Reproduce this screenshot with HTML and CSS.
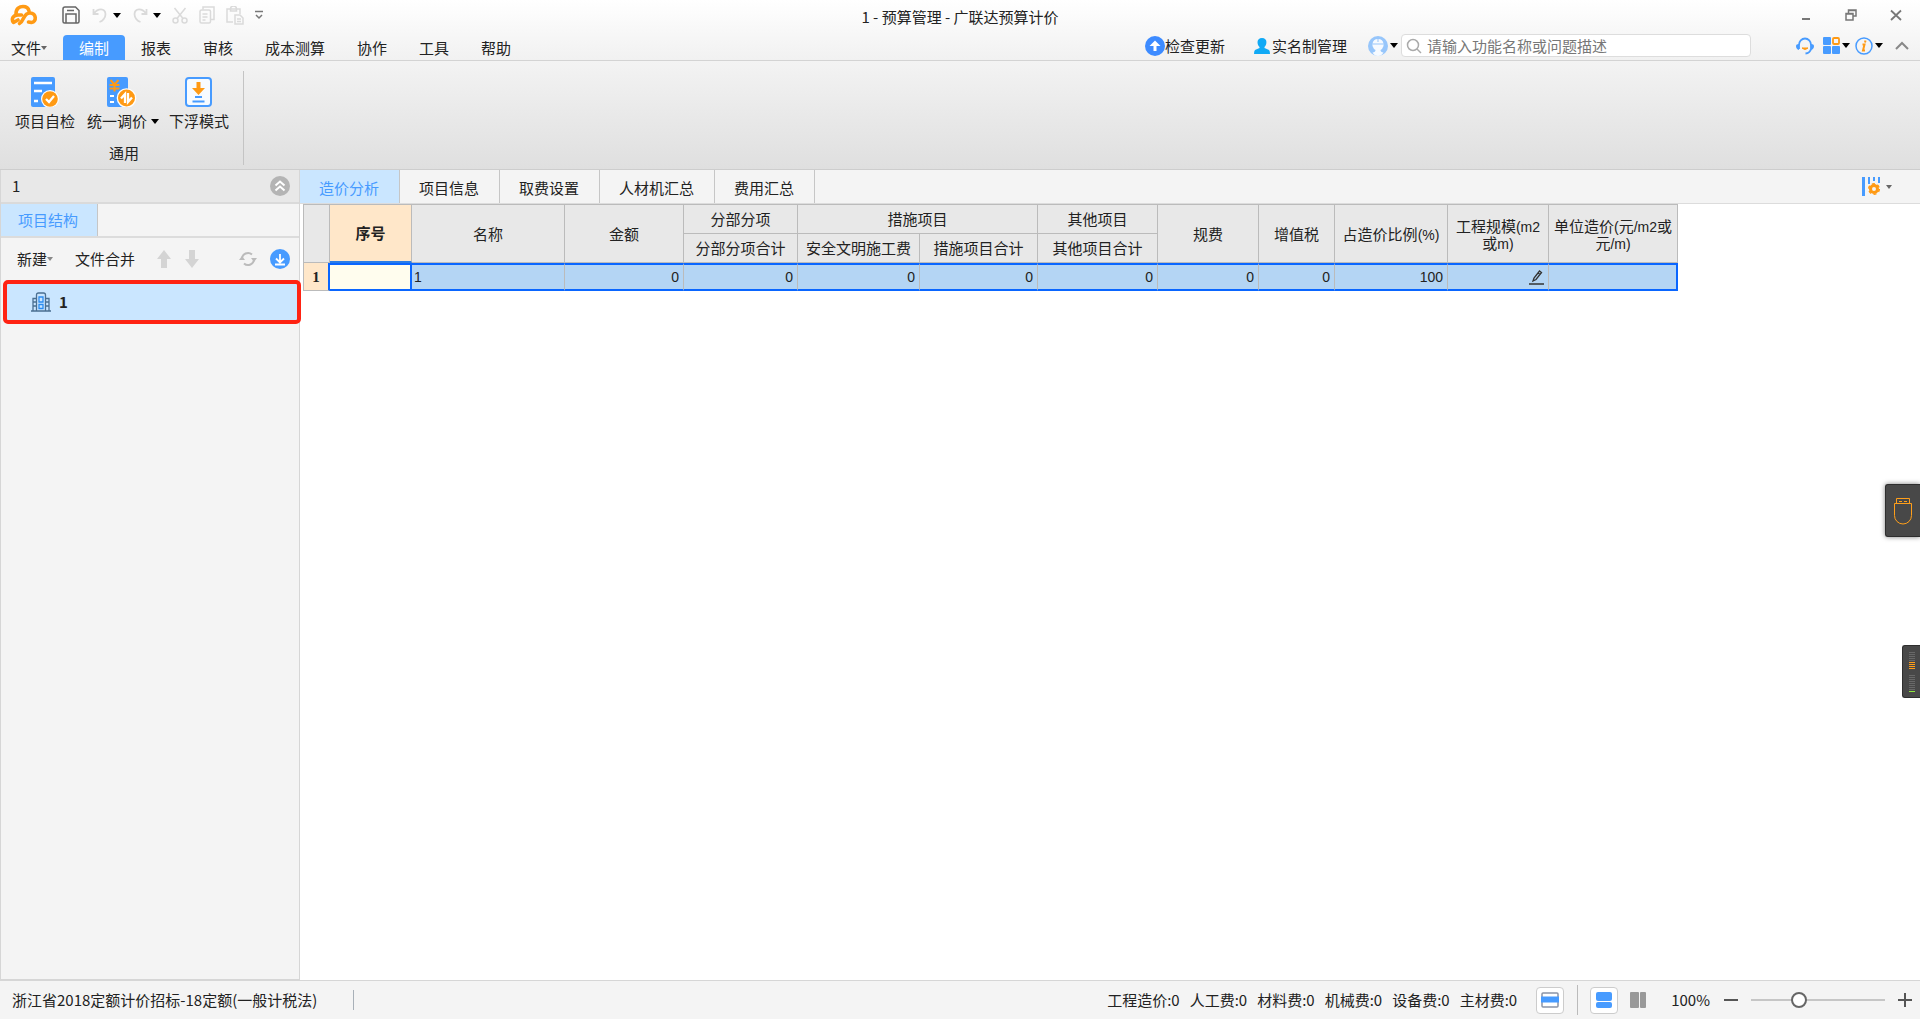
FILE: index.html
```html
<!DOCTYPE html>
<html lang="zh-CN">
<head>
<meta charset="utf-8">
<title>1 - 预算管理 - 广联达预算计价</title>
<link rel="stylesheet" href="styles.css">
</head>
<body>
<header class="top">
  <div class="titlebar">
    <div class="quick">
      <svg class="logo" width="28" height="22" viewBox="0 0 28 22" fill="none" stroke="#ff9a14" stroke-width="3.600" stroke-linecap="round" stroke-linejoin="round"><path d="M6 9.500C6 4.500 9.500 2.500 13 2.500c3.500 0 5.500 2 6 4.500"/><path d="M11.500 11H8C3 11 1 15 3.500 18.500L8 16"/><path d="M9.500 19.500C14.500 17 13 9 20 9c6.500 0 7 9 1.500 9.500L18.500 18"/></svg>
      <button class="ib save" aria-label="保存"><svg width="18" height="18" viewBox="0 0 18 18" fill="none" stroke="#666" stroke-width="1.500"><path d="M3 1h10.500l3.500 3.500v11q0 1.500-1.500 1.500h-13Q1 17 1 15.500V3q0-2 2-2zM4 16.500V8h10v8.500M5 4.500h7"/></svg></button>
      <button class="ib split" aria-label="撤销"><svg width="16" height="16" viewBox="0 0 16 16" fill="none" stroke="#dadada" stroke-width="1.800"><path d="M1.500 2v5h5M2 6.500C6 1 13 1 13.500 7c0 4-3 7-6 8"/></svg><i class="caret"></i></button>
      <button class="ib split" aria-label="恢复"><svg width="16" height="16" viewBox="0 0 16 16" fill="none" stroke="#dadada" stroke-width="1.800"><path d="M14.500 2v5h-5M14 6.500C10 1 3 1 2.500 7c0 4 3 7 6 8"/></svg><i class="caret"></i></button>
      <button class="ib" aria-label="剪切"><svg width="16" height="17" viewBox="0 0 16 17" fill="none" stroke="#dadada" stroke-width="1.500"><path d="M2.500 1l8.500 10.500M13.500 1L5 11.500"/><circle cx="3.500" cy="13.500" r="2.500"/><circle cx="12.500" cy="13.500" r="2.500"/></svg></button>
      <button class="ib" aria-label="复制"><svg width="16" height="18" viewBox="0 0 16 18" fill="none" stroke="#dadada" stroke-width="1.500"><rect x="1" y="4" width="10.500" height="13" rx="1.500"/><path d="M4 3.500V1h11v12.500h-3M3.500 8h5M3.500 11h5M3.500 14h3"/></svg></button>
      <button class="ib" aria-label="粘贴"><svg width="18" height="19" viewBox="0 0 18 19" fill="none" stroke="#dadada" stroke-width="1.500"><path d="M7 16H1V3h13v5M4.500 5V3a3 3 0 0 1 6 0v2zM9 9h5l3 3v6H9zM11 13h4M11 15.500h4"/></svg></button>
      <button class="ib" aria-label="更多"><svg width="8" height="10" viewBox="0 0 8 10" fill="none" stroke="#777" stroke-width="1.500"><path d="M0 1.500h8M1 5l3 3 3-3"/></svg></button>
    </div>
    <h1 class="title">1 - 预算管理 - 广联达预算计价</h1>
    <div class="winbtns">
      <button class="ib" aria-label="最小化"><svg width="12" height="12" viewBox="0 0 12 12"><path d="M2 9h8v2H2z" fill="#777"/></svg></button>
      <button class="ib" aria-label="还原"><svg width="12" height="12" viewBox="0 0 12 12" fill="none" stroke="#777" stroke-width="1.500"><path d="M1 4.500h7v6.500H1zM3.500 4V1H11v6H8.500M1 5h7M3.500 1.500H11"/></svg></button>
      <button class="ib" aria-label="关闭"><svg width="12" height="12" viewBox="0 0 12 12" stroke="#777" stroke-width="1.800"><path d="M1 1.500l10 9.500M11 1.500L1 11"/></svg></button>
    </div>
  </div>
  <div class="menurow">
    <nav class="menu">
      <a class="file" href="#">文件<i class="caret grey"></i></a>
      <a class="on" href="#">编制</a>
      <a href="#">报表</a><a href="#">审核</a><a href="#">成本测算</a><a href="#">协作</a><a href="#">工具</a><a href="#">帮助</a>
    </nav>
    <div class="tools">
      <button class="ib update"><svg width="20" height="20" viewBox="0 0 20 20"><circle cx="10" cy="10" r="10" fill="#3d8bff"/><path d="M10 4.500l5.500 5.500h-4v5h-3v-5h-4z" fill="#fff"/></svg>检查更新</button>
      <button class="ib real"><svg width="16" height="16" viewBox="0 0 16 16" fill="#10a9f5"><path d="M8 0c6 0 5 7 2.500 9v1l4.500 2q1 1 1 4H0q0-3 1-4l4.500-2V9C3 7 2 0 8 0z"/></svg>实名制管理</button>
      <button class="ib split user" aria-label="账户"><svg width="20" height="20" viewBox="0 0 20 20"><circle cx="10" cy="10" r="10" fill="#97c6fb"/><path d="M4.500 8Q5 3 10 3t5.500 5v2q-1 3-3 4 0 2 3 2.500-2 3.500-5.500 3.500t-5.500-3.500q3-.5 3-2.500-2-1-3-4z" fill="#f6faff"/><path d="M4.500 8h11M10 3v3" stroke="#97c6fb"/></svg><i class="caret"></i></button>
      <div class="search">
        <svg width="16" height="16" viewBox="0 0 16 16" fill="none" stroke="#aaa" stroke-width="1.500"><circle cx="7" cy="7" r="5.500"/><path d="M11 11l4 4"/></svg>
        <input type="text" aria-label="搜索" placeholder="请输入功能名称或问题描述">
      </div>
      <button class="ib" aria-label="客服"><svg width="18" height="18" viewBox="0 0 18 18" fill="none"><path d="M3 12V8a6 6.500 0 0 1 12 0v4M15 12q-1 4-5.500 4.500" stroke="#479bff" stroke-width="1.800"/><path d="M0 9q0-2 3-2v6Q0 12 0 9zM18 9q0-2-3-2v6q3-1 3-4z" fill="#479bff"/><path d="M6 11q3 3 6 0z" fill="#ff9a14" stroke="#ff9a14"/></svg></button>
      <button class="ib split apps" aria-label="应用"><svg width="17" height="17" viewBox="0 0 17 17" fill="#479bff"><rect width="8" height="8" rx="1"/><rect y="9" width="8" height="8" rx="1"/><rect x="9" y="9" width="8" height="8" rx="1"/><rect x="10" y="1" width="6" height="6" rx="1" fill="none" stroke="#ff9a14" stroke-width="1.800"/></svg><i class="caret"></i></button>
      <button class="ib split info" aria-label="信息"><svg width="18" height="18" viewBox="0 0 18 18" fill="none"><circle cx="9" cy="9" r="8" stroke="#479bff" stroke-width="1.500"/><path d="M10.500 3.500l-.5 2M7.500 7.500h2L8 13.500h2" stroke="#ff9a14" stroke-width="2"/></svg><i class="caret"></i></button>
      <button class="ib fold" aria-label="收起"><svg width="14" height="9" viewBox="0 0 14 9" fill="none" stroke="#888" stroke-width="2"><path d="M1 8l6-6 6 6"/></svg></button>
    </div>
  </div>
</header>

<section class="ribbon">
  <div class="group">
    <div class="cmds">
      <button class="cmd"><svg width="32" height="30" viewBox="0 0 32 30"><path d="M4 0h20a2 2 0 0 1 2 2v28H4a2 2 0 0 1-2-2V2a2 2 0 0 1 2-2z" fill="#479bff"/><path d="M5 6h18M5 14h8M5 24h4" stroke="#fff" stroke-width="2.500"/><circle cx="21" cy="22" r="9" fill="#fff"/><circle cx="21" cy="22" r="7.800" fill="#ff9a14"/><path d="M17 22l3 3 5-6" fill="none" stroke="#fff" stroke-width="2.300"/></svg><span>项目自检</span></button>
      <button class="cmd"><svg width="32" height="30" viewBox="0 0 32 30"><rect x="2" width="21" height="30" rx="2" fill="#479bff"/><path d="M5.500 3l4 4.500 4-4.500M9.500 8v6.500M4.500 8h10M4.500 11.500h10" fill="none" stroke="#ff9a14" stroke-width="2"/><path d="M5 19h4M5 25h4" stroke="#fff" stroke-width="2"/><circle cx="21.500" cy="21" r="9.800" fill="#fff"/><circle cx="21.500" cy="21" r="8.500" fill="#ff9a14"/><path d="M20 26V17l-4 4.500M23 16v9l4-4.500" fill="none" stroke="#fff" stroke-width="2.300"/></svg><span>统一调价<i class="caret"></i></span></button>
      <button class="cmd"><svg width="32" height="30" viewBox="0 0 32 30" fill="none"><rect x="3" y="1" width="25" height="28" rx="3" fill="#f7fbff" stroke="#479bff" stroke-width="2"/><path d="M13.500 5h4v6H22l-6.500 7L9 11h4.500z" fill="#ff9a14"/><path d="M12 20h7M9.500 24.500h12" stroke="#479bff" stroke-width="2"/></svg><span>下浮模式</span></button>
    </div>
    <div class="caption">通用</div>
  </div>
</section>

<main class="work">
  <aside class="side">
    <div class="sidehead"><span>1</span><button class="ib" aria-label="折叠"><svg width="20" height="20" viewBox="0 0 20 20" fill="none" stroke="#fff" stroke-width="2"><circle cx="10" cy="10" r="10" fill="#b4b4b4" stroke="none"/><path d="M5.500 9.500L10 5.500l4.500 4M5.500 14.500l4.500-4 4.500 4"/></svg></button></div>
    <div class="sidetabs"><button class="tab on">项目结构</button></div>
    <div class="sidebar">
      <button class="ib">新建<i class="caret dim"></i></button>
      <button class="ib merge">文件合并</button>
      <button class="ib up" aria-label="上移"><svg width="14" height="18" viewBox="0 0 14 18" fill="#d4d4d4"><path d="M7 0l7 9h-4v9H4V9H0z"/></svg></button>
      <button class="ib" aria-label="下移"><svg width="14" height="18" viewBox="0 0 14 18" fill="#d4d4d4"><path d="M7 18l7-9h-4V0H4v9H0z"/></svg></button>
      <button class="ib refresh" aria-label="刷新"><svg width="18" height="16" viewBox="0 0 18 16" fill="none" stroke="#bbb" stroke-width="2"><path d="M3 8a6 6 0 0 1 10-4.500M15 8a6 6 0 0 1-10 4.500"/><path d="M0 9h6l-3-4zM12 7h6l-3 4z" fill="#bbb" stroke="none"/></svg></button>
      <button class="ib" aria-label="下载"><svg width="20" height="20" viewBox="0 0 20 20" fill="none" stroke="#fff" stroke-width="1.800"><circle cx="10" cy="10" r="10" fill="#479bff" stroke="none"/><path d="M10 5v8M6 9.500l4 4 4-4M5 15.500h10"/></svg></button>
    </div>
    <a class="node" href="#"><svg width="20" height="20" viewBox="0 0 20 20" fill="none" stroke="#4a6f91" stroke-width="1.300"><path d="M0 19h20M5.500 19V3q0-2 2-2h5q2 0 2 2v16M5 6.500H2V19M15 6.500h3V19M2 10h3M2 14h3M15 10h3M15 14h3"/><path d="M8 5h4v5H8zM8 12.500h4v4H8z" stroke="#2b8cf0"/></svg>1</a>
  </aside>

  <section class="content">
    <div class="tabs">
      <button class="tab on">造价分析</button><button class="tab">项目信息</button><button class="tab">取费设置</button><button class="tab">人材机汇总</button><button class="tab">费用汇总</button>
      <button class="ib split colset" aria-label="列设置"><svg width="18" height="19" viewBox="0 0 18 19" fill="none"><path d="M1.500 0v19" stroke="#479bff" stroke-width="3"/><path d="M7 0v7M12 0v4M17 0v6" stroke="#479bff" stroke-width="2"/><circle cx="12" cy="12" r="3.500" stroke="#ff9a14" stroke-width="3"/><circle cx="12" cy="12" r="5.300" stroke="#ff9a14" stroke-width="1.500" stroke-dasharray="3 2.550"/></svg><i class="caret grey"></i></button>
    </div>
    <table class="grid">
      <colgroup><col class="w26"><col class="w82"><col class="w153"><col class="w119"><col class="w114"><col class="w122"><col class="w118"><col class="w120"><col class="w101"><col class="w76"><col class="w113"><col class="w101"><col class="w129"></colgroup>
      <thead>
        <tr><th rowspan="2"></th><th rowspan="2" class="cur">序号</th><th rowspan="2">名称</th><th rowspan="2">金额</th><th>分部分项</th><th colspan="2">措施项目</th><th>其他项目</th><th rowspan="2">规费</th><th rowspan="2">增值税</th><th rowspan="2">占造价比例<b>(%)</b></th><th rowspan="2" class="two">工程规模<b>(m2</b><br>或<b>m)</b></th><th rowspan="2" class="two">单位造价<b>(</b>元<b>/m2</b>或<br>元<b>/m)</b></th></tr>
        <tr><th>分部分项合计</th><th>安全文明施工费</th><th>措施项目合计</th><th>其他项目合计</th></tr>
      </thead>
      <tbody>
        <tr><th scope="row" class="rowno">1</th><td class="focus"></td><td class="name">1</td><td>0</td><td>0</td><td>0</td><td>0</td><td>0</td><td>0</td><td>0</td><td>100</td><td><svg class="pen" width="15" height="15" viewBox="0 0 15 15" fill="none" stroke="#333" stroke-width="1.300"><path d="M0 14h15" stroke-width="1.500"/><path d="M4 11l1-3 5.500-7 2 1.500L7 9.500zM9 3l2 1.500"/></svg></td><td></td></tr>
      </tbody>
    </table>
  </section>
</main>

<footer class="status">
  <span class="rule">浙江省2018定额计价招标-18定额(一般计税法)</span>
  <div class="sums"><span>工程造价:0</span><span>人工费:0</span><span>材料费:0</span><span>机械费:0</span><span>设备费:0</span><span>主材费:0</span></div>
  <button class="view" aria-label="单窗"><svg width="18" height="16" viewBox="0 0 18 16"><rect x="1" y="1" width="16" height="14" rx="1" fill="#fff" stroke="#8a94a6" stroke-width="1.500"/><path d="M0 4.500h18v6H0z" fill="#479bff"/></svg></button>
  <i class="vsep"></i>
  <button class="view" aria-label="上下布局"><svg width="16" height="16" viewBox="0 0 16 16" fill="#479bff"><rect width="16" height="9" rx="2"/><rect y="10" width="16" height="6" rx="2"/></svg></button>
  <button class="ib cols" aria-label="左右布局"><svg width="16" height="16" viewBox="0 0 16 16" fill="#999"><rect width="9" height="16" rx="1"/><rect x="10" width="6" height="16" rx="1"/></svg></button>
  <label class="pct" for="zoom">100%</label>
  <button class="ib" aria-label="缩小"><svg width="16" height="16" viewBox="0 0 16 16"><path d="M1 7h14v2H1z" fill="#555"/></svg></button>
  <input class="zoom" id="zoom" type="range" min="0" max="100" value="34">
  <button class="ib" aria-label="放大"><svg width="16" height="16" viewBox="0 0 16 16"><path d="M1 7h6V1h2v6h6v2H9v6H7V9H1z" fill="#555"/></svg></button>
</footer>

<div class="float usb"><svg width="18" height="28" viewBox="0 0 18 28" fill="none" stroke="#ff9f1a"><path d="M.5 6.500h17v12a8.500 8.500 0 0 1-17 0zM2.500 6V1.500h13V6M5 4.500h3M10 4.500h3"/></svg></div>
<div class="float meter"><svg width="6" height="42" viewBox="0 0 6 42"><path d="M0 1.500h6M0 3.500h6M0 5.500h6M0 7.500h6M0 9.500h6M0 24.500h6M0 26.500h6M0 28.500h6M0 30.500h6M0 32.500h6M0 34.500h6M0 36.500h6M0 38.500h6" stroke="#686868"/><path d="M0 11.500h6M0 13.500h6M0 15.500h6M0 17.500h6" stroke="#ff9f1a"/><path d="M0 40.500h6" stroke="#8de63c"/></svg></div>
</body>
</html>
```

FILE: styles.css
```css
* { box-sizing: border-box; }

body {
  margin: 0;
  min-height: 100vh;
  display: flex;
  flex-direction: column;
  font: 15px/20px "Noto Sans CJK SC", sans-serif;
  color: #222;
  background: #fff;
}

button, input { font: inherit; color: inherit; }
svg { display: block; flex: none; }
a { color: inherit; text-decoration: none; }

.ib {
  display: inline-flex;
  align-items: center;
  padding: 0;
  border: 0;
  background: none;
  white-space: nowrap;
}

.split { gap: 2px; }

.caret {
  flex: none;
  border: 4px solid transparent;
  border-top: 5px solid #000;
  border-bottom: 0;
}
.caret.grey { border-width: 4px 3px 0; border-top-color: #666; }
.caret.dim { border-width: 4px 3px 0; border-top-color: #888; }

/* title bar and menu */
.top {
  background: linear-gradient(#fff, #f1f1f1);
  border-bottom: 1px solid #d3d3d3;
}
.titlebar {
  display: grid;
  grid-template-columns: 1fr auto 1fr;
  align-items: center;
  height: 30px;
}
.quick { display: flex; align-items: center; gap: 11px; padding-left: 10px; }
.quick .save { margin: 0 1px 0 13px; }
.quick .split { gap: 5px; }
.title { margin: 0; font-size: 15px; font-weight: 400; padding-top: 3px; }
.winbtns { display: flex; justify-content: flex-end; gap: 33px; padding-right: 18px; }

.menurow { display: flex; justify-content: space-between; height: 30px; }
.menu { display: flex; align-items: flex-end; }
.menu a { padding: 3px 16px 2px; }
.menu a.file { display: flex; align-items: center; padding: 3px 16px 2px 11px; }
.menu a.on { background: #479bff; color: #fff; border-radius: 4px 4px 0 0; }
.tools { display: flex; align-items: center; padding: 1px 11px 0 0; }
.update { margin-right: 29px; }
.real { gap: 2px; margin-right: 21px; }
.user { margin-right: 3px; }
.search {
  display: flex;
  align-items: center;
  gap: 5px;
  width: 350px;
  height: 23px;
  padding: 0 4px;
  margin-right: 45px;
  border: 1px solid #ddd;
  border-radius: 4px;
  background: #fff;
}
.search input { flex: 1; min-width: 0; padding: 0; border: 0; outline: 0; background: none; }
.search input::placeholder { color: #777; }
.apps { margin-left: 9px; }
.info { margin-left: 5px; }
.fold { margin-left: 12px; }

/* ribbon */
.ribbon {
  display: flex;
  padding: 10px 0 4px;
  background: linear-gradient(#f3f3f3, #dfdfdf);
  border-bottom: 1px solid #cdcdcd;
}
.group { padding: 6px 14px 0 15px; border-right: 1px solid #c4c4c4; }
.cmds { display: flex; gap: 10px; }
.cmd {
  display: flex;
  flex-direction: column;
  align-items: center;
  gap: 4px;
  padding: 0;
  border: 0;
  background: none;
}
.cmd:nth-child(2) svg { margin-right: 4px; }
.cmd span { display: flex; align-items: center; gap: 4px; }
.cmd:first-child { padding-right: 2px; }
.caption { padding: 12px 0 2px 4px; text-align: center; }

/* work area */
.work { flex: 1; display: grid; grid-template-columns: 300px 1fr; }
.side {
  display: flex;
  flex-direction: column;
  background: #f4f4f4;
  border: solid #d6d6d6;
  border-width: 0 1px 1px;
}
.sidehead {
  display: flex;
  align-items: center;
  justify-content: space-between;
  height: 34px;
  padding: 0 9px 0 11px;
  background: #e8e8e8;
  border-bottom: 2px solid #dadada;
}
.tab {
  padding: 2px 20px 0 19px;
  border: 0;
  border-right: 1px solid #c6c6c6;
  background: none;
  white-space: nowrap;
}
.tab.on { background: #cae6ff; color: #479bff; }
.sidetabs { display: flex; height: 34px; border-bottom: 2px solid #dcdcdc; }
.sidetabs .tab { padding: 0 19px 0 17px; }
.sidebar { display: flex; align-items: center; height: 41px; padding: 0 9px 0 16px; }
.merge { margin: 0 22px; }
.up { margin-right: 14px; }
.refresh { margin: 0 13px 0 auto; }
.node {
  display: flex;
  align-items: center;
  gap: 8px;
  height: 44px;
  margin: 1px -2px 0 2px;
  padding-left: 24px;
  border: 4px solid #ff2313;
  border-radius: 5px;
  background: #cae6ff;
  font-weight: 700;
  z-index: 1;
}

.tabs {
  display: flex;
  height: 34px;
  background: #f4f4f4;
  border-bottom: 1px solid #dcdcdc;
}
.colset { margin: 0 28px 0 auto; gap: 6px; }

.grid {
  margin-left: 3px;
  table-layout: fixed;
  width: 1375px;
  border-collapse: separate;
  border-spacing: 0;
  border: solid #bbb;
  border-width: 1px 0 0 1px;
  line-height: 18px;
}
.w26 { width: 26px; } .w82 { width: 82px; } .w153 { width: 153px; } .w119 { width: 119px; }
.w114 { width: 114px; } .w122 { width: 122px; } .w118 { width: 118px; } .w120 { width: 120px; }
.w101 { width: 101px; } .w76 { width: 76px; } .w113 { width: 113px; } .w129 { width: 129px; }
.grid th, .grid td {
  padding: 0;
  border: solid #bbb;
  border-width: 0 1px 1px 0;
  white-space: nowrap;
}
.grid th { height: 29px; background: #e8e8e8; font-weight: 400; }
.grid th b { font: 14px/1 "Liberation Sans", sans-serif; }
.grid th.two { line-height: 17px; }
.grid thead th.cur { background: #ffe7c9; font-weight: 700; border-bottom: 2px solid #2a7de8; }
.grid .rowno {
  height: 28px;
  background: #ffe7c9;
  font: bold 15px/18px "Liberation Serif", serif;
  border-right: 2px solid #0a66ff;
}
.grid td {
  padding-right: 4px;
  font: 14px/18px "Liberation Sans", sans-serif;
  text-align: right;
  background: #b4d5f4;
  border-top: 2px solid #0a66ff;
  border-bottom: 2px solid #0a66ff;
}
.grid td:last-child { border-right: 2px solid #0a66ff; }
.grid td.focus { background: #fffdee; border-right: 2px solid #0a66ff; }
.grid td.name { padding-left: 2px; text-align: left; }
.pen { margin-left: auto; }

/* status bar */
.status {
  display: flex;
  align-items: center;
  height: 39px;
  padding: 0 7px 0 12px;
  background: #f4f4f4;
  border-top: 1px solid #d6d6d6;
  white-space: nowrap;
}
.rule { padding-right: 36px; border-right: 1px solid #a8b0b8; }
.sums { display: flex; gap: 10px; margin: 0 19px 0 auto; }
.view {
  display: grid;
  place-items: center;
  width: 28px;
  height: 27px;
  padding: 0;
  border: 1px solid #ccc;
  border-radius: 4px;
  background: #fff;
}
.vsep { width: 1px; height: 30px; margin: 0 12px 0 13px; background: #bbb; }
.cols { margin: 0 25px 0 12px; }
.pct { margin-right: 13px; }
.zoom {
  appearance: none;
  width: 134px;
  height: 16px;
  margin: 0 12px;
  background: linear-gradient(#c6c6c6, #c6c6c6) center / 100% 2px no-repeat;
}
.zoom::-webkit-slider-thumb {
  appearance: none;
  width: 16px;
  height: 16px;
  border: 2px solid #666;
  border-radius: 50%;
  background: #fff;
}

/* docked widgets over the page edge */
.float {
  position: fixed;
  right: 0;
  display: grid;
  place-items: center;
  height: 53px;
  background: #484848;
  border: 1px solid #2e2e2e;
  border-right: 0;
  border-radius: 3px 0 0 3px;
}
.usb { top: 484px; width: 35px; box-shadow: 0 0 5px rgba(0, 0, 0, .5); }
.meter { top: 645px; width: 18px; }
```
